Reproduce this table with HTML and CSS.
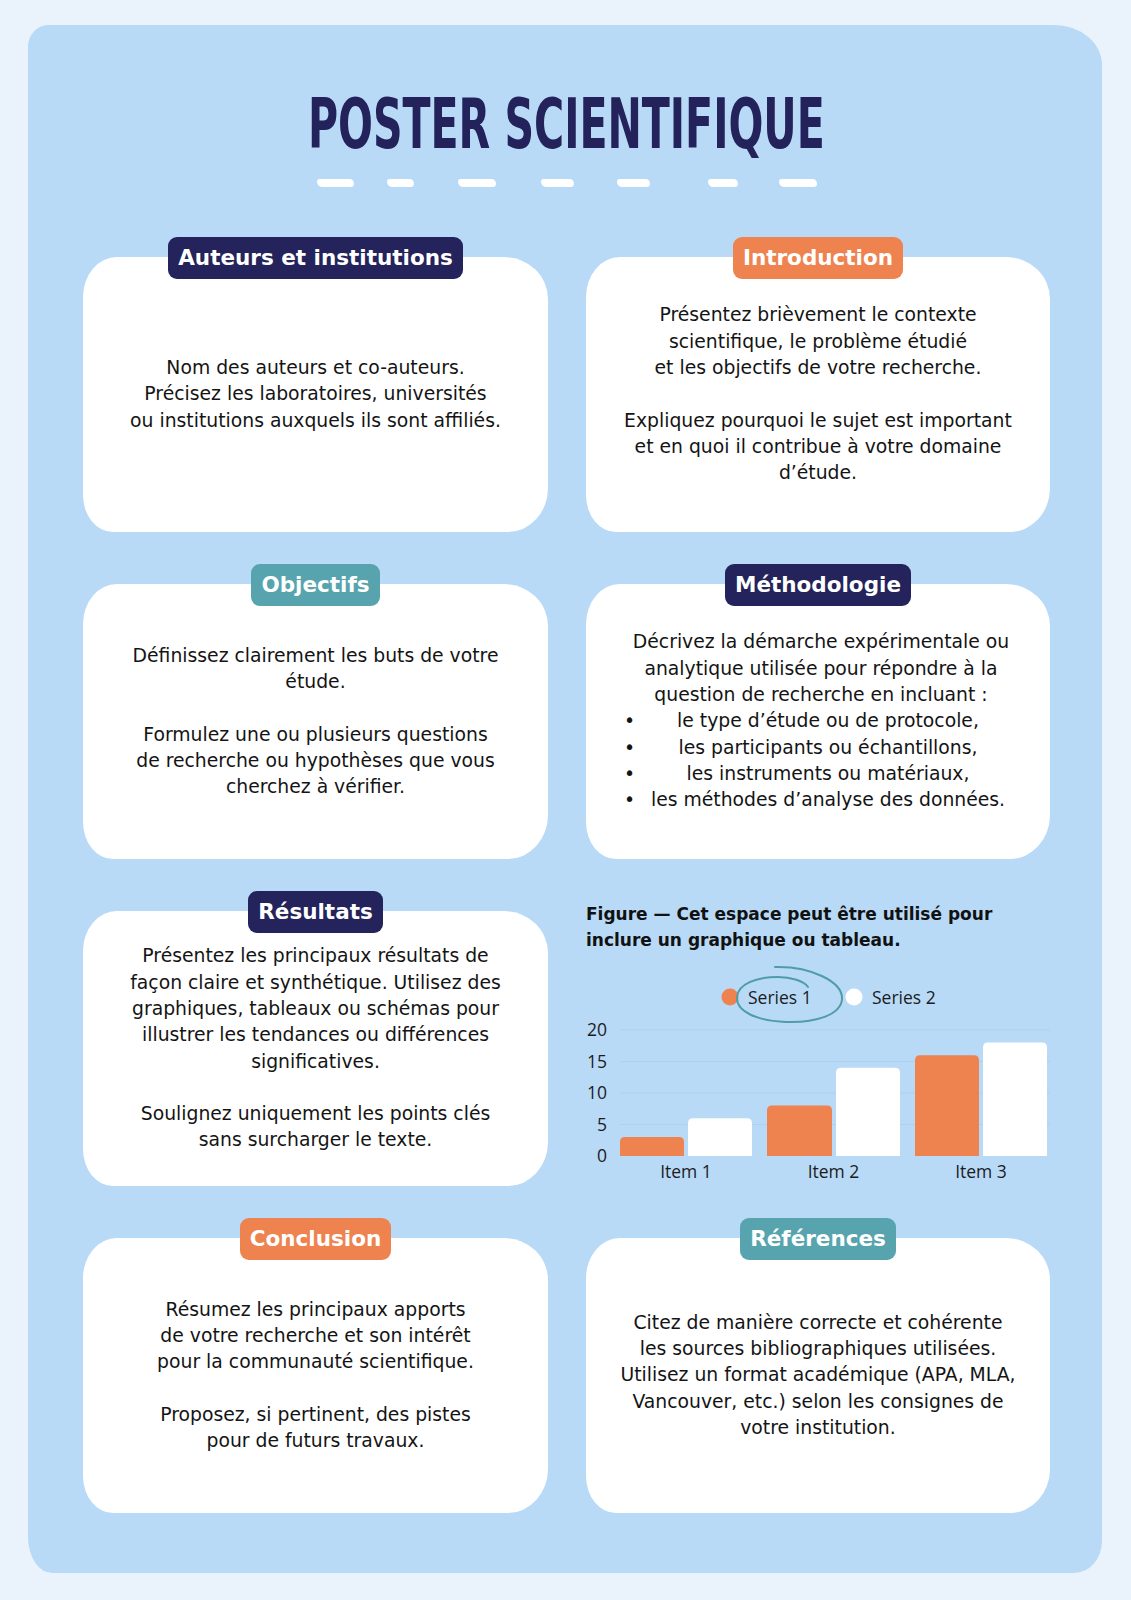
FILE: index.html
```html
<!DOCTYPE html>
<html lang="fr">
<head>
<meta charset="utf-8">
<title>Poster scientifique</title>
<link rel="stylesheet" href="styles.css">
</head>
<body>
<div class="panel">
  <header class="head">
    <h1 class="title"><span>POSTER SCIENTIFIQUE</span></h1>
    <div class="dashes"><span></span><span></span><span></span><span></span><span></span><span></span><span></span></div>
  </header>

  <main class="grid">
    <section class="sec">
      <div class="label navy">Auteurs et institutions</div>
      <div class="card">
        <div class="txt">
          <p>Nom des auteurs et co-auteurs.<br>Précisez les laboratoires, universités<br>ou institutions auxquels ils sont affiliés.</p>
        </div>
      </div>
    </section>

    <section class="sec">
      <div class="label orange">Introduction</div>
      <div class="card">
        <div class="txt">
          <p>Présentez brièvement le contexte<br>scientifique, le problème étudié<br>et les objectifs de votre recherche.</p>
          <p class="next">Expliquez pourquoi le sujet est important<br>et en quoi il contribue à votre domaine<br>d’étude.</p>
        </div>
      </div>
    </section>

    <section class="sec">
      <div class="label teal">Objectifs</div>
      <div class="card">
        <div class="txt">
          <p>Définissez clairement les buts de votre<br>étude.</p>
          <p class="next">Formulez une ou plusieurs questions<br>de recherche ou hypothèses que vous<br>cherchez à vérifier.</p>
        </div>
      </div>
    </section>

    <section class="sec">
      <div class="label navy">Méthodologie</div>
      <div class="card">
        <div class="txt method">
          <p>Décrivez la démarche expérimentale ou<br>analytique utilisée pour répondre à la<br>question de recherche en incluant :</p>
          <ul class="bullets">
            <li><span class="dot">•</span><span class="li-txt">le type d’étude ou de protocole,</span></li>
            <li><span class="dot">•</span><span class="li-txt">les participants ou échantillons,</span></li>
            <li><span class="dot">•</span><span class="li-txt">les instruments ou matériaux,</span></li>
            <li><span class="dot">•</span><span class="li-txt">les méthodes d’analyse des données.</span></li>
          </ul>
        </div>
      </div>
    </section>

    <section class="sec">
      <div class="label navy">Résultats</div>
      <div class="card">
        <div class="txt">
          <p>Présentez les principaux résultats de<br>façon claire et synthétique. Utilisez des<br>graphiques, tableaux ou schémas pour<br>illustrer les tendances ou différences<br>significatives.</p>
          <p class="next">Soulignez uniquement les points clés<br>sans surcharger le texte.</p>
        </div>
      </div>
    </section>

    <section class="sec figure">
      <p class="fig-title">Figure — Cet espace peut être utilisé pour<br>inclure un graphique ou tableau.</p>
      <svg class="chart" width="464" height="232" viewBox="0 0 464 232" xmlns="http://www.w3.org/2000/svg">
        <g class="gridlines">
          <line x1="34" y1="77" x2="464" y2="77"/>
          <line x1="34" y1="108.5" x2="464" y2="108.5"/>
          <line x1="34" y1="140" x2="464" y2="140"/>
          <line x1="34" y1="171.5" x2="464" y2="171.5"/>
        </g>
        <g class="bars">
          <path class="s1" d="M34,203 V189.1 Q34,184.1 39,184.1 H93 Q98,184.1 98,189.1 V203 Z"/>
          <path class="s2" d="M102,203 V170.2 Q102,165.2 107,165.2 H161 Q166,165.2 166,170.2 V203 Z"/>
          <path class="s1" d="M181,203 V157.6 Q181,152.6 186,152.6 H241 Q246,152.6 246,157.6 V203 Z"/>
          <path class="s2" d="M250,203 V119.8 Q250,114.8 255,114.8 H309 Q314,114.8 314,119.8 V203 Z"/>
          <path class="s1" d="M329,203 V107.2 Q329,102.2 334,102.2 H388 Q393,102.2 393,107.2 V203 Z"/>
          <path class="s2" d="M397,203 V94.6 Q397,89.6 402,89.6 H456 Q461,89.6 461,94.6 V203 Z"/>
        </g>
        <g class="axis">
          <text x="21" y="83.4" text-anchor="end">20</text>
          <text x="21" y="114.9" text-anchor="end">15</text>
          <text x="21" y="146.4" text-anchor="end">10</text>
          <text x="21" y="177.9" text-anchor="end">5</text>
          <text x="21" y="209.4" text-anchor="end">0</text>
          <text x="100" y="224.5" text-anchor="middle">Item 1</text>
          <text x="247.5" y="224.5" text-anchor="middle">Item 2</text>
          <text x="395" y="224.5" text-anchor="middle">Item 3</text>
        </g>
        <g class="legend">
          <circle class="s1" cx="144" cy="44" r="8.5"/>
          <text x="162" y="50.5">Series 1</text>
          <circle class="s2" cx="268" cy="44" r="8.5"/>
          <text x="286" y="50.5">Series 2</text>
        </g>
        <path class="loop" d="M189,14 C225,13 257,29 256,46 C255,62 229,70 200,69 C172,68 150,59 151,44 C152,31 170,24 192,24 C205,24 218,28 222,34"/>
      </svg>
    </section>

    <section class="sec">
      <div class="label orange">Conclusion</div>
      <div class="card">
        <div class="txt">
          <p>Résumez les principaux apports<br>de votre recherche et son intérêt<br>pour la communauté scientifique.</p>
          <p class="next">Proposez, si pertinent, des pistes<br>pour de futurs travaux.</p>
        </div>
      </div>
    </section>

    <section class="sec">
      <div class="label teal">Références</div>
      <div class="card">
        <div class="txt">
          <p>Citez de manière correcte et cohérente<br>les sources bibliographiques utilisées.<br>Utilisez un format académique (APA, MLA,<br>Vancouver, etc.) selon les consignes de<br>votre institution.</p>
        </div>
      </div>
    </section>
  </main>
</div>
</body>
</html>
```

FILE: styles.css
```css
html, body {
  margin: 0;
  padding: 0;
  background: #eaf2fb;
}

body {
  min-height: 1600px;
  font-family: "DejaVu Sans", "Noto Sans", sans-serif;
  color: #141414;
}

.panel {
  box-sizing: border-box;
  width: 1074px;
  height: 1548px;
  margin: 25px 0 0 28px;
  padding: 64px 52px 60px 55px;
  background: #b8daf7;
  border-radius: 20px 48px 28px 24px / 22px 40px 32px 36px;
}

/* ---------- header ---------- */
.head {
  display: flex;
  flex-direction: column;
  align-items: center;
}

.title {
  margin: 0;
  height: 70px;
  font-family: "DejaVu Sans", sans-serif;
  font-weight: 700;
  font-stretch: condensed;
  font-size: 70px;
  line-height: 70px;
  color: #23225a;
  text-align: center;
  white-space: nowrap;
}

.title span {
  display: inline-block;
  transform: scaleX(0.652);
  transform-origin: center;
}

.dashes {
  display: flex;
  margin-top: 20px;
  height: 8px;
}

.dashes span {
  display: block;
  height: 8px;
  background: #ffffff;
  border-radius: 3px 5px 4px 6px;
}

.dashes span:nth-child(1) { width: 37px; }
.dashes span:nth-child(2) { width: 27px; margin-left: 33px; }
.dashes span:nth-child(3) { width: 38px; margin-left: 44px; }
.dashes span:nth-child(4) { width: 33px; margin-left: 45px; }
.dashes span:nth-child(5) { width: 33px; margin-left: 43px; }
.dashes span:nth-child(6) { width: 30px; margin-left: 58px; }
.dashes span:nth-child(7) { width: 38px; margin-left: 41px; }

/* ---------- grid ---------- */
.grid {
  display: grid;
  grid-template-columns: 465px 464px;
  column-gap: 38px;
  row-gap: 32px;
  margin-top: 50px;
}

.sec {
  display: flex;
  flex-direction: column;
  align-items: center;
  height: 295px;
}

.label {
  position: relative;
  z-index: 1;
  height: 42px;
  padding: 0 10px;
  border-radius: 9px;
  font-family: "DejaVu Sans", sans-serif;
  font-weight: 700;
  font-size: 21.5px;
  line-height: 42px;
  color: #ffffff;
  white-space: nowrap;
}

.navy { background: #24235b; }
.orange { background: #ee8350; }
.teal { background: #57a4ae; }

.card {
  box-sizing: border-box;
  width: 100%;
  height: 275px;
  margin-top: -22px;
  display: flex;
  align-items: center;
  justify-content: center;
  background: #ffffff;
  border-radius: 34px 44px 40px 30px / 40px 42px 44px 37px;
}

.txt {
  text-align: center;
  font-size: 18.8px;
  line-height: 26.3px;
}

.txt p {
  margin: 0;
}

.txt p.next {
  margin-top: 26.3px;
}

/* methodology list */
.method {
  width: 394px;
  margin-left: 6px;
}

.bullets {
  margin: 0;
  padding: 0;
  list-style: none;
}

.bullets li {
  display: flex;
  align-items: baseline;
}

.dot {
  width: 14px;
  text-align: left;
}

.li-txt {
  flex: 1;
  text-align: center;
}

/* ---------- figure ---------- */
.figure {
  align-items: flex-start;
  padding-top: 10px;
  box-sizing: border-box;
}

.fig-title {
  margin: 0;
  font-family: "DejaVu Sans", sans-serif;
  font-weight: 700;
  font-size: 17px;
  line-height: 26px;
  color: #111111;
}

.chart {
  display: block;
  margin-top: 0;
}

.gridlines line {
  stroke: #acd1f1;
  stroke-width: 1;
}

.s1 { fill: #ee8350; }
.s2 { fill: #ffffff; }

.chart text {
  font-family: "Open Sans", "DejaVu Sans", sans-serif;
  font-size: 17.5px;
  fill: #1c1c1c;
}

.loop {
  fill: none;
  stroke: #4f9da7;
  stroke-width: 2;
  stroke-linecap: round;
}
```
